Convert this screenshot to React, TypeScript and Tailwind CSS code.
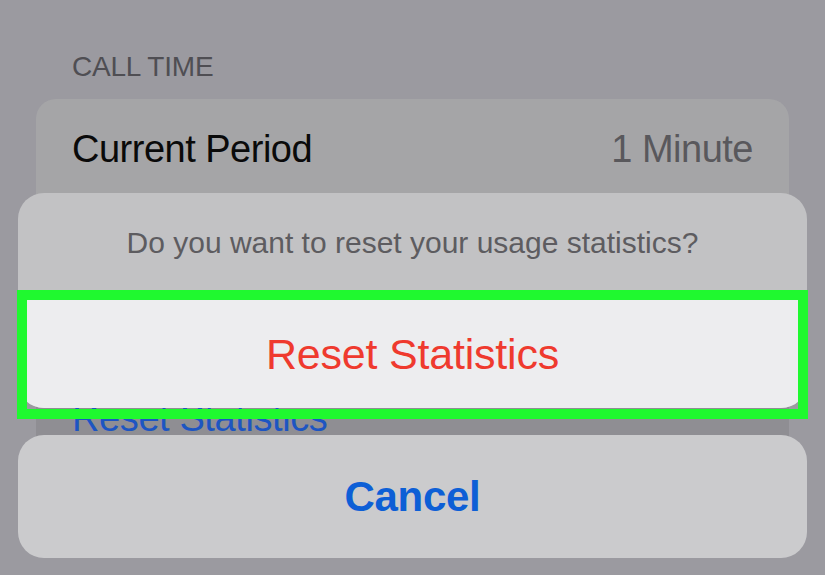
import React from "react";

const font = { fontFamily: '"Liberation Sans", Arial, sans-serif' };

const App: React.FC = () => {
  return (
    <div
      className="relative w-[825px] h-[575px] overflow-hidden bg-[#9b9aa0]"
      style={font}
    >
      {/* settings list behind the sheet */}
      <div className="px-[36px] pt-[43px]">
        <div className="pl-[36px] h-[56px] flex items-start pt-[10px] text-[28px] leading-none text-[#4f4e53] tracking-[-0.2px]">
          CALL TIME
        </div>
        <div className="rounded-[20px] bg-[#a5a5a7] overflow-hidden">
          <div className="h-[100px] flex items-center justify-between px-[36px]">
            <span className="text-[38px] leading-none text-[#0a0a0a] tracking-[-0.5px]">Current Period</span>
            <span className="text-[38px] leading-none text-[#59585c] tracking-[-0.5px]">1 Minute</span>
          </div>
          <div className="h-[100px] border-t border-[#9a9a9c]" />
        </div>
        <div className="mt-[69px] rounded-[20px] bg-[#8f8e93] overflow-hidden">
          <div className="h-[100px] flex items-center px-[36px]">
            <span className="text-[38px] leading-none text-[#1d55c2] tracking-[-0.4px]">Reset Statistics</span>
          </div>
        </div>
      </div>

      {/* action sheet */}
      <div className="absolute left-[18px] right-[18px] top-[193px] flex flex-col gap-[27px]">
        <div className="rounded-[26px] overflow-hidden bg-[#c2c2c4]">
          <div className="h-[100px] flex items-center justify-center">
            <span className="text-[30px] leading-none text-[#5d5c60]">
              Do you want to reset your usage statistics?
            </span>
          </div>
          <div className="h-[115px] bg-[#ededef] flex items-center justify-center pt-[7px]">
            <span className="text-[43px] leading-none text-[#ef3a2e] tracking-[-0.2px]">Reset Statistics</span>
          </div>
        </div>
        <div className="h-[123px] rounded-[26px] bg-[#cbcbcd] flex items-center justify-center">
          <span className="text-[42px] leading-none font-bold text-[#0d5fd6] tracking-[-0.3px]">Cancel</span>
        </div>
      </div>

      {/* highlight frame */}
      <div className="absolute left-[17px] top-[290px] w-[791px] h-[129px] border-[10px] border-[#1ff92f]" />
    </div>
  );
};

export default App;
